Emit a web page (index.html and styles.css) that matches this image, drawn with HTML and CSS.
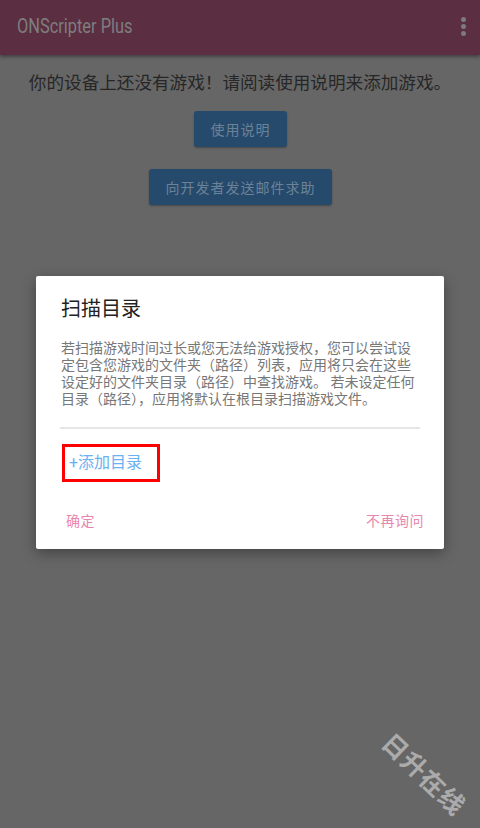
FILE: index.html
```html
<!DOCTYPE html>
<html lang="zh-CN">
  <head>
    <meta charset="UTF-8" />
    <meta name="viewport" content="width=device-width, initial-scale=1.0" />
    <title>ONScripter Plus</title>
    <link rel="stylesheet" href="styles.css">
  </head>
  <body>
    <div class="app">
      <header class="appbar">
        <span class="appbar-title">ONScripter Plus</span>
        <span class="menu">
          <i></i><i></i><i></i>
        </span>
      </header>
      <main class="home">
        <p class="empty-tip">你的设备上还没有游戏！请阅读使用说明来添加游戏。</p>
        <button class="btn">使用说明</button>
        <button class="btn">向开发者发送邮件求助</button>
      </main>

      <!-- 扫描目录弹窗 -->
      <div class="dialog">
        <h2 class="dialog-title">扫描目录</h2>
        <p class="dialog-text">若扫描游戏时间过长或您无法给游戏授权，您可以尝试设定包含您游戏的文件夹（路径）列表，应用将只会在这些设定好的文件夹目录（路径）中查找游戏。 若未设定任何目录（路径），应用将默认在根目录扫描游戏文件。</p>
        <div class="divider"></div>
        <div class="add-dir">+添加目录</div>
        <div class="dialog-actions">
          <span class="action">确定</span>
          <span class="action">不再询问</span>
        </div>
      </div>

      <div class="watermark">日升在线</div>
    </div>
  </body>
</html>
```

FILE: styles.css
```css
* {
  box-sizing: border-box;
}
body {
  margin: 0;
  font-family: Roboto, "Noto Sans CJK SC", sans-serif;
}
.app {
  position: relative;
  width: 480px;
  height: 828px;
  overflow: hidden;
  background-color: #666;
}
.appbar {
  height: 55px;
  padding: 0 14px 0 17px;
  display: flex;
  align-items: center;
  justify-content: space-between;
  background-color: #5c2e42;
  box-shadow: 0 2px 3px rgba(0, 0, 0, 0.35);
}
/* 标题字体偏窄，横向压缩一下 */
.appbar-title {
  color: #7e7e7e;
  font-size: 19.5px;
  padding-bottom: 2px;
  transform: scaleX(0.84);
  transform-origin: left center;
}
.menu {
  display: flex;
  flex-direction: column;
  gap: 2px;
  padding-bottom: 3px;
}
.menu i {
  width: 5px;
  height: 5px;
  border-radius: 50%;
  background-color: #7b7b7b;
}
.home {
  display: flex;
  flex-direction: column;
  align-items: center;
}
.empty-tip {
  margin: 16px 0 16px;
  font-size: 17.6px;
  line-height: 24px;
  color: #262626;
}
.btn {
  height: 36px;
  margin-bottom: 22px;
  padding: 0 16px 0 17px;
  border: none;
  border-radius: 3px;
  background-color: #264a6b;
  color: #6b8299;
  font-family: Roboto, "Noto Sans CJK SC", sans-serif;
  font-size: 14px;
  letter-spacing: 1px;
  box-shadow: 0 1px 2px rgba(0, 0, 0, 0.3);
}
.dialog {
  position: absolute;
  left: 36px;
  top: 276px;
  width: 408px;
  height: 273px;
  padding: 21px 24px 0 25px;
  background-color: #fff;
  border-radius: 2px;
  box-shadow: 0 4px 14px rgba(0, 0, 0, 0.35);
}
.dialog-title {
  margin: 0;
  font-size: 20px;
  font-weight: normal;
  line-height: 24px;
  color: #222;
}
.dialog-text {
  margin: 19px 0 0;
  font-size: 14px;
  line-height: 17px;
  color: #777;
}
.divider {
  height: 2px;
  width: 360px;
  margin-top: 19px;
  margin-left: -1px;
  background-color: #e6e6e6;
}
.add-dir {
  display: inline-block;
  margin-top: 15px;
  margin-left: 1px;
  padding: 4px 15px 5px 4px;
  border: 3px solid #f00;
  font-size: 16px;
  line-height: 23px;
  color: #6ab2f2;
}
.dialog-actions {
  display: flex;
  justify-content: space-between;
  margin-top: 28px;
  margin-right: -4px;
  padding-left: 5px;
  font-size: 14px;
  color: #e887ad;
}
.action {
  letter-spacing: 0.5px;
}
.watermark {
  position: absolute;
  left: 373px;
  top: 755px;
  transform: rotate(44deg);
  font-size: 25px;
  font-weight: bold;
  color: #ababab;
  letter-spacing: 1px;
}
```
